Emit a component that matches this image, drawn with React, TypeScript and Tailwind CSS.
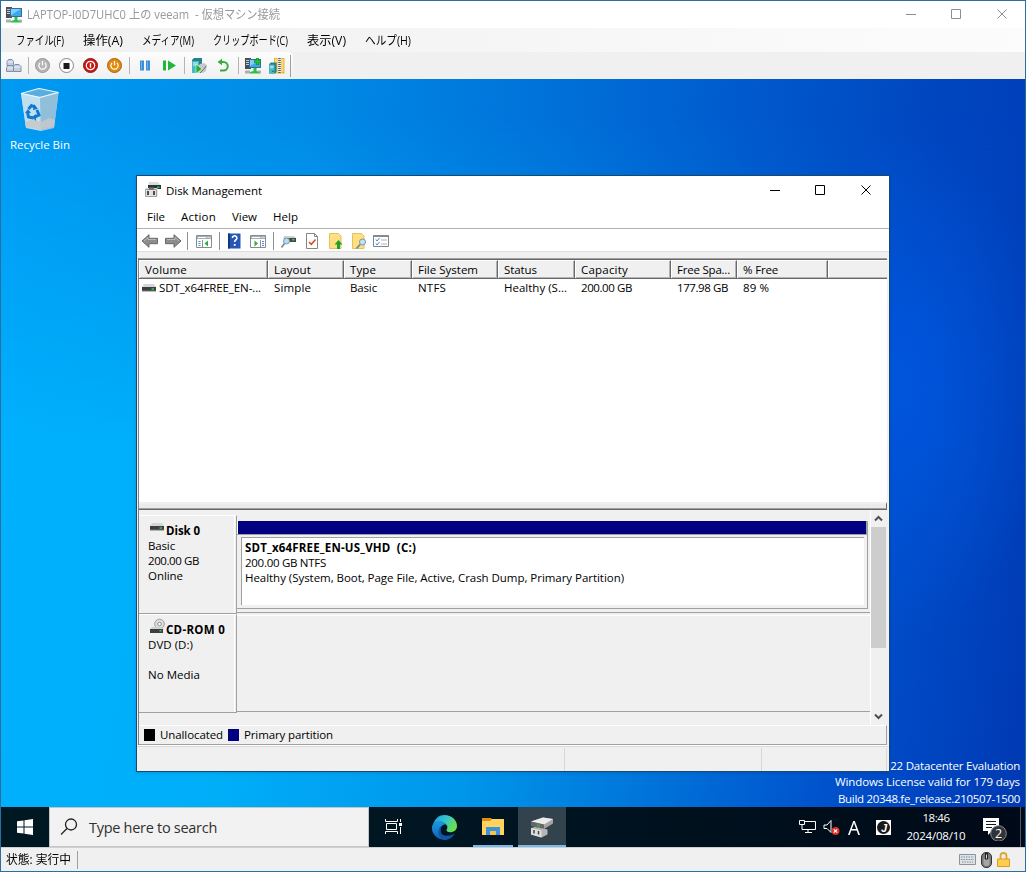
import React, { useLayoutEffect, useRef } from "react";

/* Text set to a known advance width, by tracking (default) or by condensing the glyphs. */
function Fit({ w, squeeze, className = "", children }: { w: number; squeeze?: boolean; className?: string; children: string }) {
  const ref = useRef<HTMLSpanElement>(null);
  useLayoutEffect(() => {
    const el = ref.current;
    if (!el) return;
    el.style.letterSpacing = "0px";
    el.style.transform = "none";
    const natural = el.getBoundingClientRect().width;
    if (squeeze) el.style.transform = `scaleX(${w / natural})`;
    else el.style.letterSpacing = `${(w - natural) / children.length}px`;
  }, [w, squeeze, children]);
  return (
    <span className={`block shrink-0 overflow-visible whitespace-pre ${className}`} style={{ width: w }}>
      <span ref={ref} className="inline-block origin-left whitespace-pre">{children}</span>
    </span>
  );
}

const Cell = ({ w = "w-6", children }: { w?: string; children?: React.ReactNode }) => (
  <div className={`flex h-full shrink-0 items-center justify-center ${w}`}>{children}</div>
);

const Svg = ({ s = 16, children }: { s?: number; children: React.ReactNode }) => (
  <svg width={s} height={s} viewBox={`0 0 ${s} ${s}`} fill="none" className="shrink-0">{children}</svg>
);

const VmIcon = ({ plus }: { plus?: boolean }) => (
  <Svg>
    <path d="M0 0h6v11H0z" fill="#4a4f54" />
    <path d="M1 2.500h3M1 4.500h3M1 6.500h3" stroke="#c3c9cd" />
    <path d="M4 1h12v9H4z" fill="#2d6f9f" />
    <path d="M5 2h10v7H5z" fill="#3fa6e8" />
    <path d="M5 2h10L5 8z" fill="#7fcdfa" />
    <path d="M8.500 10h3v3l3.500 1v1.500H5V14l3.500-1z" fill="#2fc043" />
    <path d="M0 12.500h5v3H0zM12.500 12.500H16v3h-1.500z" fill="#a9afb3" />
    {plus && <><path d="M12.500 0v7M9 3.500h7" stroke="#0a8a20" strokeWidth="2.600" /><path d="M12.500 .6v5.800M9.600 3.500h5.800" stroke="#1fc93a" strokeWidth="1.600" /></>}
  </Svg>
);

const Server = () => (
  <>
    <path d="M1 2l2-2h8v12l-2 3H1z" fill="#25818c" />
    <path d="M1 3h7v12H1z" fill="#48b9c4" />
    <path d="M2 5h5M2 7h5" stroke="#dff7fa" />
    <path d="M5 11h2v2H5z" fill="#176670" />
  </>
);

const PowerGlyph = () => (
  <>
    <path d="M5.6 5.4a3.6 3.6 0 1 0 4.8 0" stroke="#fff" strokeWidth="1.2" />
    <path d="M8 3.5v4.3" stroke="#fff" strokeWidth="1.3" />
  </>
);

function VmToolbar() {
  const sep = "h-[17px] w-px bg-[#b4b4b4]";
  return (
    <div className="flex h-[27px] w-full items-center bg-[#f0f0f0]">
      <div className="flex h-full w-[292px] shrink-0 items-center rounded-r bg-linear-to-b from-[#fdfdfd] to-[#f0f0f0]">
        <Cell w="w-[25px]">
          <Svg>
            <path d="M1 3.500L2.500 1.500h3.500L7.500 3.500v4H1zM.5 9.500L2 7.500h4.500l1 2v4h-7zM7.500 8.500L9 6.500h4l2 2v5H7.500z" fill="#c5cfe0" stroke="#8090ac" />
            <path d="M1.500 4h5.500M1.500 10h5.500M8 9h6.500" stroke="#eef3fa" />
          </Svg>
        </Cell>
        <Cell w="w-[4px]"><i className={sep} /></Cell>
        <Cell><Svg><circle cx="8.500" cy="7.500" r="7" fill="#b5b5b5" stroke="#969696" /><g transform="translate(.5 -.5)"><PowerGlyph /></g></Svg></Cell>
        <Cell><Svg><circle cx="8.500" cy="7.500" r="7" fill="#fff" stroke="#858585" /><path d="M5.500 5h6v6h-6z" fill="#1c1c1c" /></Svg></Cell>
        <Cell><Svg><circle cx="8.500" cy="7.500" r="7" fill="#cc1512" stroke="#8c1a12" /><circle cx="8.500" cy="7.500" r="4.200" stroke="#fff" strokeWidth="1.200" /><path d="M8.500 5.300v4.400" stroke="#fff" strokeWidth="1.400" /></Svg></Cell>
        <Cell><Svg><circle cx="8.500" cy="7.500" r="7" fill="#e08a0e" stroke="#a86508" /><g transform="translate(.5 -.5)"><PowerGlyph /></g></Svg></Cell>
        <Cell w="w-[7px]"><i className={sep} /></Cell>
        <Cell><Svg><path d="M3 2.500h4v10H3zM9 2.500h4v10H9z" fill="#3b8fd8" /><path d="M4 3.500h1v8H4zM10 3.500h1v8h-1z" fill="#6bb3ee" /></Svg></Cell>
        <Cell><Svg><path d="M2 2.500h3v10H2zM7 2.500l8 5-8 5z" fill="#1fb83a" /></Svg></Cell>
        <Cell w="w-[6px]"><i className={sep} /></Cell>
        <Cell>
          <Svg>
            <Server />
            <path d="M9 6l4-1 3 2-1 6-3 2H6V9z" fill="#c3c8ca" />
            <path d="M9 15l4-4 2-3" stroke="#6e7578" />
            <path d="M5 6l6 5-6 4.500z" fill="#1eae34" stroke="#eefaf0" strokeWidth=".6" />
          </Svg>
        </Cell>
        <Cell><Svg><path d="M5 4h3.500a4 4 0 0 1 0 8.500H5" stroke="#35ad3f" strokeWidth="2" /><path d="M7 .8L2.500 4 7 7.200z" fill="#35ad3f" /></Svg></Cell>
        <Cell w="w-[6px]"><i className={sep} /></Cell>
        <Cell><VmIcon plus /></Cell>
        <Cell>
          <Svg>
            <path d="M5 0h10.500v15.500H5z" fill="#e7b633" />
            <path d="M6 1h2v13H6zM13 1h1.500v13H13z" fill="#f9dc76" />
            <path d="M10.500 0v15" stroke="#efefe8" strokeWidth="4" />
            <path d="M10.500 0v15" stroke="#5d5a50" strokeWidth="2.600" strokeDasharray="1 1" />
            <g transform="translate(-.5 4.500) scale(.74)"><Server /></g>
          </Svg>
        </Cell>
        <i className="ml-px h-[22px] w-px bg-[#a0a0a0]" />
      </div>
    </div>
  );
}

const WindowButtons = ({ dark }: { dark?: boolean }) => (
  <div className={`flex h-full shrink-0 items-center gap-9 pr-[18px] ${dark ? "text-black" : "pb-px text-[#8e8e8e]"}`}>
    {["M0 5.500h10", "M.5 .5h9v9h-9z", "M.5 .5l9 9M9.500 .5l-9 9"].map((d) => (
      <svg key={d} width="10" height="10" viewBox="0 0 10 10" fill="none" className="first:-mr-px"><path d={d} stroke="currentColor" /></svg>
    ))}
  </div>
);

const Drive = () => (
  <svg width="14" height="8" viewBox="0 0 14 8" className="shrink-0">
    <path d="M2 0h10l2 3H0z" fill="#d6d6d6" /><path d="M0 3h14v4H0z" fill="#3b3f41" /><path d="M0 6.500h14v1H0z" fill="#777" />
    <path d="M9.500 4.200h2.500v1.600H9.500z" fill="#31c944" />
  </svg>
);

const DiskMgmtIcon = () => (
  <Svg>
    <path d="M4 0h9l3 3.500H3z" fill="#dcdcdc" /><path d="M3 3h13v4H3z" fill="#2e3335" /><path d="M12 4.500h2.500V6H12z" fill="#31c944" />
    <path d="M.5 6h12v8.500H.5z" fill="#cfcfcf" /><path d="M0 7.500h12V15H0z" fill="#e2e2e2" /><path d="M.5 7.500v7h11v-7z" stroke="#a0a0a0" /><path d="M2 9h2v4H2zM8 9h2v4H8z" fill="#4a4a4a" /><path d="M4 5.500h5V8H4z" fill="#777" />
  </Svg>
);

const Pane = ({ flip }: { flip?: boolean }) => (
  <Svg>
    <path d="M.5 2.500h15v12H.5z" fill="#fff" stroke="#858b91" /><path d="M1 3h14v3H1z" fill="#a6adb4" /><path d="M2 4.500h8" stroke="#fff" /><path d="M11.500 4.500h1M13.500 4.500h1" stroke="#fff" />
    {flip
      ? <><path d="M10.500 7v7" stroke="#8b9197" /><path d="M12 8.500h2M12 10.500h2M12 12.500h2" stroke="#4a8ac6" /><path d="M4.500 7.500v6L8 10.500z" fill="#2fae3b" /></>
      : <><path d="M6.500 7v7" stroke="#8b9197" /><path d="M2.500 8.500h2M2.500 10.500h2M2.500 12.500h2" stroke="#4a8ac6" /><path d="M12 7.500v6l-3.500-3z" fill="#2fae3b" /></>}
  </Svg>
);

const ArrowIcon = ({ right }: { right?: boolean }) => (
  <svg width="18" height="16" viewBox="0 0 18 16" className={right ? "-scale-x-100" : ""}>
    <path d="M1 8l7-6.300v3.600h8.500v5.400H8v3.600z" fill="#8d8d8d" stroke="#686868" /><path d="M3 8l4-3.500v2h8" stroke="#b9b9b9" fill="none" />
  </svg>
);

function DiskToolbar() {
  const sep = "h-[18px] w-px bg-[#909090]";
  return (
    <div className="flex h-[22px] items-center bg-white pt-[2px] pl-px">
      <Cell><ArrowIcon /></Cell>
      <Cell w="w-[22px]"><ArrowIcon right /></Cell>
      <Cell w="w-[7px]"><i className={sep} /></Cell>
      <Cell w="w-[25px]"><Pane /></Cell>
      <Cell w="w-1.5"><i className={sep} /></Cell>
      <Cell>
        <Svg>
          <path d="M2 .5h12.500v15H2z" fill="#2757b5" /><path d="M2 .5h2v15H2z" fill="#14377f" />
          <path d="M6.500 5a2.200 2.200 0 1 1 3.600 1.600c-1 .8-1.500 1.100-1.500 2.500" stroke="#fff" strokeWidth="1.600" /><path d="M7.800 11h1.800v1.800H7.800z" fill="#fff" />
        </Svg>
      </Cell>
      <Cell><Pane flip /></Cell>
      <Cell w="w-1.5"><i className={sep} /></Cell>
      <Cell>
        <Svg>
          <path d="M4 3h10l2 2H3z" fill="#d2d2d2" /><path d="M4 5h12v4H4z" fill="#414648" /><path d="M12 6h2.500v1.500H12z" fill="#35d048" />
          <circle cx="6.500" cy="8" r="3" fill="#b4dbf2" stroke="#7f97a8" /><path d="M4.500 10.500l-3 4" stroke="#8090a0" strokeWidth="1.800" />
        </Svg>
      </Cell>
      <Cell>
        <Svg><path d="M2.500.5h8l3 3v12h-11z" fill="#fff" stroke="#858585" /><path d="M10.500.5v3h3" stroke="#858585" /><path d="M5 9l2.300 2.300 4.200-4.800" stroke="#e0472b" strokeWidth="1.600" /></Svg>
      </Cell>
      <Cell>
        <Svg><path d="M1.500 .5h9l2.500 2.500v12.500H1.500z" fill="#ffdf80" stroke="#e3c064" /><path d="M10.500 7l4 4.500H12V16H9v-4.500H6.500z" fill="#1fa22d" /></Svg>
      </Cell>
      <Cell w="w-[22px]">
        <Svg><path d="M1.500 .5h9l2.500 2.500v12.500H1.500z" fill="#ffdf80" stroke="#e3c064" /><circle cx="11.500" cy="9" r="3" fill="#c4e3f7" stroke="#7893a8" /><path d="M9 11.500l-3.500 4" stroke="#71889c" strokeWidth="1.800" /></Svg>
      </Cell>
      <Cell w="w-[22px]">
        <Svg><path d="M.5 2.500h15v11H.5z" fill="#fff" stroke="#7f858a" /><path d="M0 2h16v2H0z" fill="#858b90" /><path d="M3 6.500l1 1.500 2.500-3M3 10.500l1 1.500 2.500-3" stroke="#3188d2" /><path d="M8 7h6M8 11h6" stroke="#b0b0b0" /></Svg>
      </Cell>
    </div>
  );
}

type Col = { w: string; head: string; hw: number; val: string; vw: number };
const columns: Col[] = [
  { w: "w-[129px]", head: "Volume", hw: 42, val: "SDT_x64FREE_EN-...", vw: 102 },
  { w: "w-[76px]", head: "Layout", hw: 37, val: "Simple", vw: 37 },
  { w: "w-[68px]", head: "Type", hw: 26, val: "Basic", vw: 27 },
  { w: "w-[86px]", head: "File System", hw: 60, val: "NTFS", vw: 28 },
  { w: "w-[77px]", head: "Status", hw: 33, val: "Healthy (S...", vw: 63 },
  { w: "w-[96px]", head: "Capacity", hw: 47, val: "200.00 GB", vw: 51 },
  { w: "w-[66px]", head: "Free Spa...", hw: 53, val: "177.98 GB", vw: 51 },
  { w: "w-[91px]", head: "% Free", hw: 35, val: "89 %", vw: 26 },
];

function VolumeList() {
  return (
    <div className="flex h-[252px] w-[748px] shrink-0 flex-col border-t border-[#a0a0a0] bg-white">
      <div className="flex h-[20px] shrink-0 border-t border-b border-[#696969] bg-[#f0f0f0]">
        {columns.map((c) => (
          <div key={c.head} className={`flex shrink-0 items-center border-t border-r border-l border-t-white border-r-[#696969] border-l-white ${c.w}`}>
            <div className="flex h-full min-w-0 flex-1 items-center border-r border-b border-[#b4b4b4] pl-[5px]"><Fit w={c.hw}>{c.head}</Fit></div>
          </div>
        ))}
        <div className="flex-1 border-t border-b border-l border-white border-b-[#b4b4b4]" />
      </div>
      <div className="flex h-[17px]">
        {columns.map((c, i) => (
          <div key={c.head} className={`flex shrink-0 items-center ${i === 0 ? "gap-[3px] pl-[3px]" : "pl-1.5"} ${c.w}`}>
            {i === 0 && <Drive />}
            <Fit w={c.vw}>{c.val}</Fit>
          </div>
        ))}
      </div>
      <div className="flex-1" />
      <div className="h-[7px] border-t-2 border-r border-b border-t-[#f0f0f0] border-r-[#696969] border-b-[#a0a0a0] bg-[#ebebeb]" />
      <div className="h-px bg-[#696969]" />
    </div>
  );
}

function DiskLabel({ icon, name, nw, lines }: { icon: React.ReactNode; name: string; nw: number; lines: [string, number][] }) {
  return (
    <div className="flex w-[98px] shrink-0 flex-col border-t border-r border-b border-t-white border-r-[#a0a0a0] border-b-[#a0a0a0]">
      <div className="mr-px flex flex-1 flex-col border-r border-white pt-[7px] pl-[9px] leading-[15px]">
        <div className="flex h-[15px] gap-[2px] pl-[2px] font-bold"><span className="flex w-[14px] items-start">{icon}</span><Fit w={nw}>{name}</Fit></div>
        {lines.map(([t, w], i) => <div key={i} className="h-[15px]">{t && <Fit w={w}>{t}</Fit>}</div>)}
      </div>
    </div>
  );
}

const CdIcon = () => (
  <svg width="16" height="16" viewBox="0 0 16 16" className="-mt-[3px] shrink-0 overflow-visible">
    <circle cx="9.500" cy="5" r="4.800" fill="#dedede" stroke="#a0a0a0" /><circle cx="9.500" cy="5" r="1.800" fill="#fff" stroke="#8e8e8e" />
    <path d="M2 8h10l2 2H0z" fill="#d0d0d0" /><path d="M0 10h13v4H0z" fill="#3b3f41" /><path d="M9.500 11h2v1.500h-2z" fill="#31c944" />
  </svg>
);

function DiskMap() {
  return (
    <div className="flex h-[215px] bg-[#f0f0f0]">
      <div className="flex w-[731px] shrink-0 flex-col pt-[5px]">
        <div className="flex h-[99px]">
          <DiskLabel icon={<Drive />} name="Disk 0" nw={34} lines={[["Basic", 27], ["200.00 GB", 51], ["Online", 35]]} />
          <div className="mb-px flex flex-1 flex-col border-b border-[#a0a0a0] pt-[6px] pb-[3px]">
            <div className="mr-[2px] h-[13px] border-r-2 border-l border-r-[#a0a0a0] border-l-white bg-[#000080]" />
            <div className="mr-[2px] flex h-[75px] flex-col border-t border-r border-b border-[#a0a0a0] pt-[2px] pr-[3px] pb-[3px] pl-[4px]">
              <div className="flex-1 border-t border-l border-[#a0a0a0] bg-white pt-[2px] pl-[3px] leading-[15px]">
                <Fit w={171} className="h-[15px] font-bold">SDT_x64FREE_EN-US_VHD  (C:)</Fit>
                <Fit w={81} className="h-[15px]">200.00 GB NTFS</Fit>
                <Fit w={379} className="h-[15px]">Healthy (System, Boot, Page File, Active, Crash Dump, Primary Partition)</Fit>
              </div>
            </div>
          </div>
        </div>
        <div className="flex h-[99px]">
          <DiskLabel icon={<CdIcon />} name="CD-ROM 0" nw={59} lines={[["DVD (D:)", 45], ["", 0], ["No Media", 52]]} />
          <div className="mt-px mb-px flex-1 border-t border-b border-t-white border-b-[#a0a0a0]" />
        </div>
      </div>
      <div className="flex w-[16px] flex-col border-l border-white bg-[#f0f0f0]">
        <div className="flex h-[17px] items-center justify-center"><Svg s={9}><path d="M1 6.500l3.500-3.500L8 6.500" stroke="#505050" strokeWidth="2" /></Svg></div>
        <div className="h-[121px] w-[15px] bg-[#cdcdcd]" />
        <div className="flex-1" />
        <div className="flex h-[17px] items-center justify-center"><Svg s={9}><path d="M1 2.500L4.500 6 8 2.500" stroke="#505050" strokeWidth="2" /></Svg></div>
      </div>
    </div>
  );
}

function DiskManagement() {
  return (
    <div className="absolute top-[96px] left-[135px] flex h-[597px] w-[754px] flex-col border border-[#164a70] bg-[#f0f0f0] text-black shadow-[0_1px_3px_rgba(0,20,60,.15)]">
      <div className="flex h-[28px] shrink-0 items-center justify-between bg-white pl-2">
        <div className="flex items-center gap-[5px]"><DiskMgmtIcon /><Fit w={96}>Disk Management</Fit></div>
        <WindowButtons dark />
      </div>
      <div className="flex h-[25px] shrink-0 items-center gap-4 border-b border-[#b0b0b0] bg-white pl-[10px]">
        <Fit w={18}>File</Fit><Fit w={35}>Action</Fit><Fit w={25}>View</Fit><Fit w={25}>Help</Fit>
      </div>
      <DiskToolbar />
      <div className="h-[7px] shrink-0 border-t border-[#dedede]" />
      <div className="ml-px flex h-[487px] w-[749px] shrink-0 flex-col border-l border-[#808080]">
        <VolumeList />
        <DiskMap />
        <div className="flex h-5 shrink-0 items-center border-t border-r border-b border-t-white border-r-[#a0a0a0] border-b-[#a0a0a0] pb-px pl-[5px]">
          <i className="mt-px mr-[5px] h-3 w-[11px] bg-black" /><Fit w={63}>Unallocated</Fit>
          <i className="mt-px mr-[5px] ml-[5px] h-3 w-[11px] bg-[#000080]" /><Fit w={89}>Primary partition</Fit>
        </div>
      </div>
      <div className="flex flex-1 flex-col border-t border-white">
        <div className="flex flex-1 border-t border-[#d9d9d9] pt-px">
          <i className="w-[428px] border-r border-[#d7d7d7]" /><i className="w-[197px] border-r border-[#d7d7d7]" /><i className="w-[125px] border-r border-[#d7d7d7]" />
        </div>
      </div>
    </div>
  );
}

function RecycleBin() {
  return (
    <div className="absolute top-[9px] left-[8px] flex w-[62px] flex-col items-center">
      <svg width="40" height="46" viewBox="0 0 40 46">
        <path d="M1 5.500L19 .5l19.500 4L34 40l-13 3-15-3z" fill="#a9d5ee" />
        <path d="M1 5.500l18-5 19.500 4L20 9.500z" fill="#5badde" stroke="#dcf1fb" strokeWidth="1.200" />
        <path d="M1 5.500l19 4 1 33-15-3z" fill="#c0e0f2" /><path d="M20 9.500l18.500-5L34 39.500l-13 3z" fill="#8fbfda" />
        <path d="M5 34l8-3 8 3 8-4 6 2-1 7-13 3-15-3z" fill="#c6c8ca" opacity=".85" /><path d="M1 5.500l19 4 18.500-5" fill="none" stroke="#eaf8ff" />
        <g fill="none" stroke="#1278cf" strokeWidth="3"><path d="M8.500 21l3-3.500 4 2" /><path d="M17 22l2 5-4 2" /><path d="M7.500 24l1 5 5 1" /></g>
        <path d="M14 16l4 5-5 1zM16 26v7l-4-4zM5 25l3-4 3 4z" fill="#1278cf" />
      </svg>
      <Fit w={60} className="mt-[3px]">Recycle Bin</Fit>
    </div>
  );
}

function Taskbar() {
  return (
    <div className="flex h-10 shrink-0 bg-linear-to-r from-[#001822] via-[#001521] via-50% to-[#000918] text-white">
      <div className="flex w-12 items-center justify-center">
        <Svg><path d="M0 2.300L6.500 1.400V7.500H0zM7.500 1.200L16 0v7.500H7.500zM0 8.500h6.500v6.100L0 13.700zM7.500 8.500H16V16l-8.500-1.200z" fill="#fff" /></Svg>
      </div>
      <div className="flex w-80 items-center border border-[#c5c5c5] bg-[#f2f2f2] pl-[10px] text-[#303030]">
        <Svg s={18}><circle cx="11" cy="6.500" r="5.500" stroke="#222" strokeWidth="1.300" /><path d="M7 10.500L1 16.500" stroke="#222" strokeWidth="1.300" /></Svg>
        <Fit w={128} className="ml-[11px] text-[14.500px]">Type here to search</Fit>
      </div>
      <div className="flex w-12 items-center justify-center">
        <Svg s={18}><path d="M2.500 5.500h10v6h-10zM1.500 1v2.500h12V1M1.500 16v-2.500h12V16" stroke="#fff" /><path d="M16.500 1v3M16.500 9v7" stroke="#fff" /><path d="M15 5h3v3h-3z" fill="#fff" /></Svg>
      </div>
      <div className="flex w-14 items-center justify-center">
        <svg width="25" height="25" viewBox="0 0 24 24" className="-ml-[2px]">
          <defs>
            <linearGradient id="edgeTop" x1="0" y1="0" x2="1" y2=".4"><stop offset="0" stopColor="#1b9ed8" /><stop offset=".55" stopColor="#34c4d2" /><stop offset="1" stopColor="#6be04f" /></linearGradient>
            <linearGradient id="edgeLow" x1="0" y1="0" x2="0" y2="1"><stop offset="0" stopColor="#1d9ae0" /><stop offset="1" stopColor="#1061b6" /></linearGradient>
          </defs>
          <path d="M1 9C3 3 7 0 12 0c7 0 12 5 12 10.500 0 4-3 6-6.500 6-2.500 0-4-1-3.500-2.500.8-1 1-2 .5-3.500C13 7 5 4 1 9z" fill="url(#edgeTop)" />
          <path d="M0 11c2-7 10-7 13.500-2C10 9 8 11 8 14c0 5 4 10 7 9.500C6 25-1 19 0 11z" fill="url(#edgeLow)" />
          <path d="M11 9.500C6 13 8 20 14 20c4 0 6.500-1.500 8-2.500-2 4-6 6.500-10 6.500C4 22 5 11 11 9.500z" fill="#0d57a4" />
        </svg>
      </div>
      <div className="flex w-10 flex-col border-b-2 border-[#76b9ed] pt-[10px] pl-[9px]">
        <svg width="22" height="20" viewBox="0 0 22 20"><path d="M0 1h9l2 2v3H0z" fill="#e58a12" /><path d="M0 4h8l2-2h12v16H0z" fill="#ffd35c" /><path d="M4 10h14v8h-4v-4H8v4H4z" fill="#3b93dd" /><path d="M8 14h6v4H8z" fill="#f3c44c" /></svg>
      </div>
      <div className="ml-[5px] flex w-12 items-center justify-center border-b-2 border-[#76b9ed] bg-[#33434d] pt-1">
        <svg width="24" height="24" viewBox="0 0 24 24">
          <path d="M1 5.500l12-4 10 1.500v4.500L14 13 1 9.500z" fill="#a4a4a4" /><path d="M1 5.500l12-4 10 1.500-9 5.500z" fill="#ececec" /><path d="M1 5.500l13 3V13L1 9.500z" fill="#666" /><path d="M7 8.300l3 .7v1.800l-3-.7z" fill="#27bb3e" />
          <path d="M1 12l4-1 12.500 2.500v5l-6 3L1 18.500z" fill="#b5b5b5" /><path d="M1 12l10.500 2.500v7L1 18.500z" fill="#dedede" /><path d="M4 14v3.500M8.500 15v3.500" stroke="#444" strokeWidth="1.500" />
        </svg>
      </div>
      <div className="flex flex-1 items-center justify-end">
        <svg width="18" height="16" viewBox="0 0 18 16" fill="none" stroke="#fff"><path d="M5.500 2.500h11v8H5M9 10.500v3M6 13.500h7M.5 1.500h5v4h-5zM3 5.500v5h3" /></svg>
        <svg width="17" height="18" viewBox="0 0 17 18" fill="none" className="ml-[6px]"><path d="M1 7h3l4-4.500v12L4 10.500H1z" stroke="#fff" /><circle cx="12.500" cy="13" r="4" fill="#d92f25" /><path d="M10.800 11.300l3.400 3.400M14.200 11.300l-3.400 3.400" stroke="#fff" strokeWidth="1.200" /></svg>
        <Fit w={12} squeeze className="ml-[8px] text-[20px]">A</Fit>
        <svg width="15" height="15" viewBox="0 0 15 15" className="ml-[16px]">
          <path d="M0 0h15v15H0z" fill="#fff" /><circle cx="7.500" cy="7.500" r="6.500" fill="#1a1a1a" />
          <text x="8" y="11.500" fill="#fff" fontSize="11" fontWeight="700" textAnchor="middle" fontFamily="Liberation Sans" fontStyle="italic">J</text>
        </svg>
        <div className="ml-[15px] flex w-[60px] flex-col items-center leading-[18px]"><Fit w={27}>18:46</Fit><Fit w={59}>2024/08/10</Fit></div>
        <svg width="26" height="28" viewBox="0 0 26 28" className="ml-[16px]">
          <path d="M1 5h16v13h-7l-4 4v-4H1z" fill="#fff" /><path d="M4 8.500h10M4 11.500h10M4 14.500h6" stroke="#111822" />
          <circle cx="16.500" cy="20.500" r="7.800" fill="#303338" stroke="#8b8e92" /><text x="16.500" y="25" fill="#fff" fontSize="12.500" textAnchor="middle">2</text>
        </svg>
        <i className="mr-1 ml-[12px] h-full w-px bg-[#525a65]" />
      </div>
    </div>
  );
}

const menus: [string, number][] = [["ファイル(F)", 48], ["操作(A)", 40], ["メディア(M)", 52], ["クリップボード(C)", 75], ["表示(V)", 39], ["ヘルプ(H)", 46]];

export default function App() {
  return (
    <div className="flex h-[872px] w-[1026px] flex-col overflow-hidden border border-[#2b6f9e] bg-[#f0f0f0] font-['Open_Sans','Noto_Sans_CJK_JP',sans-serif] text-[11.500px] leading-[15px] text-black">
      <div className="flex h-[27px] shrink-0 items-center justify-between bg-white pl-[5px]">
        <div className="flex items-center gap-[5px] text-[#999999]"><VmIcon /><Fit w={253} squeeze className="text-[12px]">LAPTOP-I0D7UHC0 上の veeam  - 仮想マシン接続</Fit></div>
        <WindowButtons />
      </div>
      <div className="flex h-[24px] shrink-0 items-center gap-[19px] bg-linear-to-r from-[#f0f0f0] to-[#fcfcfc] pl-[15px]">
        {menus.map(([t, w]) => <Fit key={t} w={w} squeeze className="text-[12px]">{t}</Fit>)}
      </div>
      <VmToolbar />
      <div className="relative h-[728px] shrink-0 overflow-hidden bg-[linear-gradient(98deg,#00b1ff_0%,#00aef8_28%,#0096ea_50%,#0070d8_68%,#004ecb_84%,#0039b2_100%)] text-white">
        <div className="absolute inset-0 bg-[linear-gradient(98deg,#009af2_0%,#008ae6_28%,#0070d8_50%,#0055ca_70%,#0045be_84%,#003ab6_100%)] mask-[linear-gradient(to_bottom,black_5%,transparent_50%)]" />
        <div className="absolute inset-0 bg-[radial-gradient(ellipse_14%_35%_at_88%_42%,#0055dc_0%,#0055dc00_100%)]" />
        <RecycleBin />
        <div className="absolute right-[5px] bottom-0 flex flex-col items-end leading-[16.500px]">
          <Fit w={229}>Windows Server 2022 Datacenter Evaluation</Fit>
          <Fit w={185}>Windows License valid for 179 days</Fit>
          <Fit w={182}>Build 20348.fe_release.210507-1500</Fit>
        </div>
        <DiskManagement />
      </div>
      <Taskbar />
      <div className="flex flex-1 items-center border-t border-[#d0d0d0] pl-[5px]">
        <Fit w={65} squeeze className="text-[12px]">状態: 実行中</Fit>
        <i className="ml-[6px] h-[18px] w-px bg-[#a0a0a0]" />
        <div className="ml-auto mr-[15px] flex items-center gap-[5px]">
          <svg width="17" height="11" viewBox="0 0 17 11"><path d="M.5.5h16v10H.5z" fill="#dfe3e6" stroke="#8a949c" /><path d="M2 3h13M2 5.500h13M3 8h11" stroke="#81909c" strokeDasharray="1.500 1" /></svg>
          <svg width="11" height="16" viewBox="0 0 11 16"><rect x=".5" y=".5" width="10" height="15" rx="4.500" fill="#77797b" stroke="#333" /><path d="M2.500 7v4a3 3 0 0 0 6 0V7" fill="#a4a6a8" /><path d="M5.500 1v6.500" stroke="#222" strokeWidth="3" /><path d="M5.500 2.500v4" stroke="#ddd" /></svg>
          <svg width="13" height="15" viewBox="0 0 13 15"><path d="M3.500 7V4a3 3 0 0 1 6 0v3" fill="none" stroke="#dba82c" strokeWidth="1.800" /><path d="M.5 7h12v7.500H.5z" fill="#ffcc4c" stroke="#d99e25" /></svg>
        </div>
      </div>
    </div>
  );
}
